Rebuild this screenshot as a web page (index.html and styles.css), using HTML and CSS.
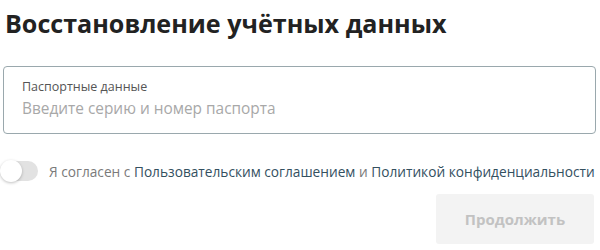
FILE: index.html
```html
<!DOCTYPE html>
<html lang="ru">
<head>
    <meta charset="UTF-8">
    <meta name="viewport" content="width=device-width, initial-scale=1.0">
    <title>Восстановление учётных данных</title>
    <link rel="stylesheet" href="styles.css">
</head>

<body>
    <div class="container">
        <h2>Восстановление учётных данных</h2>

        <!-- Passport input with floating label -->
        <div class="field">
            <label for="passport">Паспортные данные</label>
            <input type="text" id="passport" placeholder="Введите серию и номер паспорта">
        </div>

        <!-- Agreement toggle -->
        <div class="agree">
            <span class="toggle"><span class="knob"></span></span>
            <span class="agree-text">Я согласен с <a href="#">Пользовательским соглашением</a> и <a href="#">Политикой конфиденциальности</a></span>
        </div>

        <div class="actions">
            <button type="submit" disabled>Продолжить</button>
        </div>
    </div>
</body>

</html>
```

FILE: styles.css
```css
/* Page basics */
body {
    font-family: "Open Sans", Arial, sans-serif;
    background-color: #fff;
    margin: 0;
}

.container {
    padding: 0 4px 0 3px;
}

/* Header */
h2 {
    margin: 0;
    padding-top: 4px;
    padding-left: 2px;
    font-size: 25.1px;
    font-weight: 700;
    color: #222;
    line-height: 38px;
}

/* Input box */
.field {
    margin-top: 24px;
    border: 1px solid #9aa8ad;
    border-radius: 4px;
    padding: 10px 18px 10px 18px;
    height: 46px;
}

.field label {
    display: block;
    font-size: 12.5px;
    color: #555;
    line-height: 20px;
}

.field input {
    border: none;
    outline: none;
    padding: 0;
    width: 100%;
    font-family: inherit;
    font-size: 15.4px;
    line-height: 24px;
    color: #333;
}

.field input::placeholder {
    color: #a8a8a8;
}

/* Toggle row */
.agree {
    display: flex;
    align-items: center;
    margin-top: 27px;
    margin-left: -3px;
}

.toggle {
    position: relative;
    width: 38px;
    height: 20px;
    border-radius: 10px;
    background-color: #e2e2e2;
    flex-shrink: 0;
}

.knob {
    position: absolute;
    left: 0;
    top: -1px;
    width: 22px;
    height: 22px;
    border-radius: 50%;
    background-color: #fff;
    box-shadow: 0 1px 3px rgba(0, 0, 0, 0.25);
}

.agree-text {
    margin-left: 11px;
    font-size: 13.7px;
    color: #7a7a7a;
    white-space: nowrap;
}

.agree-text a {
    color: #34505f;
    text-decoration: none;
}

/* Submit button */
.actions {
    display: flex;
    justify-content: flex-end;
    margin-top: 13px;
    padding-right: 2px;
}

button {
    width: 158px;
    height: 50px;
    border: none;
    border-radius: 3px;
    background-color: #f3f3f3;
    color: #c2c2c2;
    font-family: inherit;
    font-size: 15px;
    font-weight: 700;
}
```
